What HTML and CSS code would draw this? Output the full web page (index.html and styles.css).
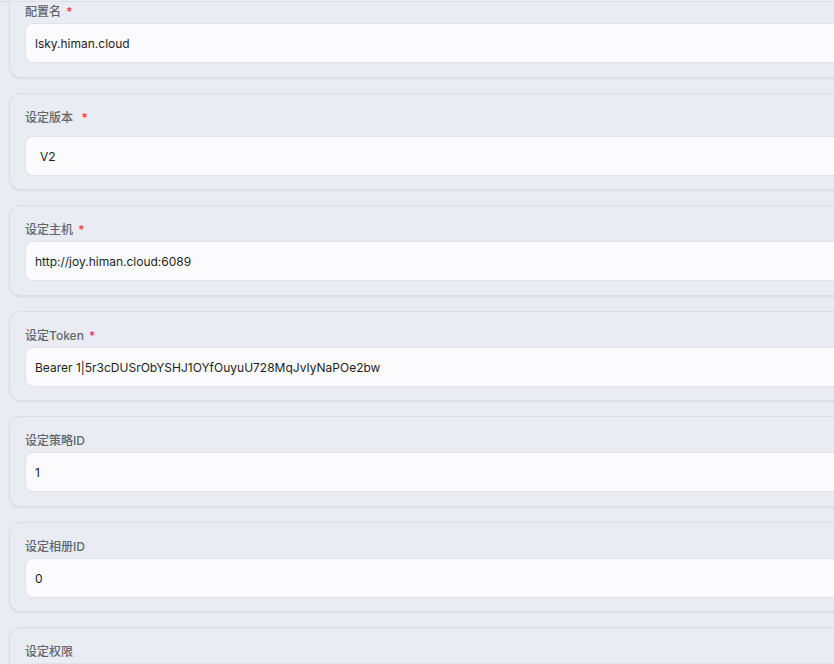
FILE: index.html
```html
<!DOCTYPE html>
<html lang="zh">
<head>
<meta charset="utf-8">
<link rel="stylesheet" href="styles.css">
</head>
<body>
<div class="topline"></div>
<div class="page">
  <div class="card first">
    <div class="label">配置名 <span class="req">*</span></div>
    <div class="input">lsky.himan.cloud</div>
  </div>
  <div class="card">
    <div class="label wide">设定版本 &nbsp;<span class="req">*</span></div>
    <div class="input select">V2</div>
  </div>
  <div class="card">
    <div class="label">设定主机 <span class="req">*</span></div>
    <div class="input">http://joy.himan.cloud:6089</div>
  </div>
  <div class="card">
    <div class="label">设定Token <span class="req">*</span></div>
    <div class="input">Bearer 1|5r3cDUSrObYSHJ1OYfOuyuU728MqJvIyNaPOe2bw</div>
  </div>
  <div class="card">
    <div class="label">设定策略ID</div>
    <div class="input">1</div>
  </div>
  <div class="card">
    <div class="label">设定相册ID</div>
    <div class="input">0</div>
  </div>
  <div class="card">
    <div class="label">设定权限</div>
    <div class="input">&nbsp;</div>
  </div>
</div>
</body>
</html>
```
FILE: styles.css
```css
html, body {
  margin: 0;
  padding: 0;
  background: #e9ecf3;
  overflow: hidden;
  height: 664px;
}
body {
  font-family: Inter, "Noto Sans CJK SC", sans-serif;
  position: relative;
}
.topline {
  position: absolute;
  left: 0;
  right: 0;
  top: 1px;
  height: 1px;
  background: #dcdfe6;
  z-index: 2;
}
.page {
  display: flex;
  flex-direction: column;
  gap: 15px;
  padding-left: 9px;
  margin-top: -13px;
  width: 920px;
}
.card {
  border: 1px solid #dcdfe6;
  border-radius: 12px;
  background: #e9ecf3;
  box-shadow: 0 1px 2px rgba(0, 0, 0, 0.08);
  padding: 14px 15px 13.5px;
}
.label {
  font-size: 12px;
  line-height: 20px;
  font-weight: 500;
  color: #62666c;
  margin-bottom: 1px;
}
.label.wide {
  margin-bottom: 8px;
}
.req {
  color: #f03a3a;
  margin-left: 2px;
}
.input {
  height: 38px;
  border: 1px solid #e0e2e8;
  border-radius: 8px;
  background: #fbfbfd;
  font-size: 12px;
  line-height: 39px;
  color: #1e1e1e;
  padding-left: 9px;
}
.input.select {
  padding-left: 14px;
}
```
